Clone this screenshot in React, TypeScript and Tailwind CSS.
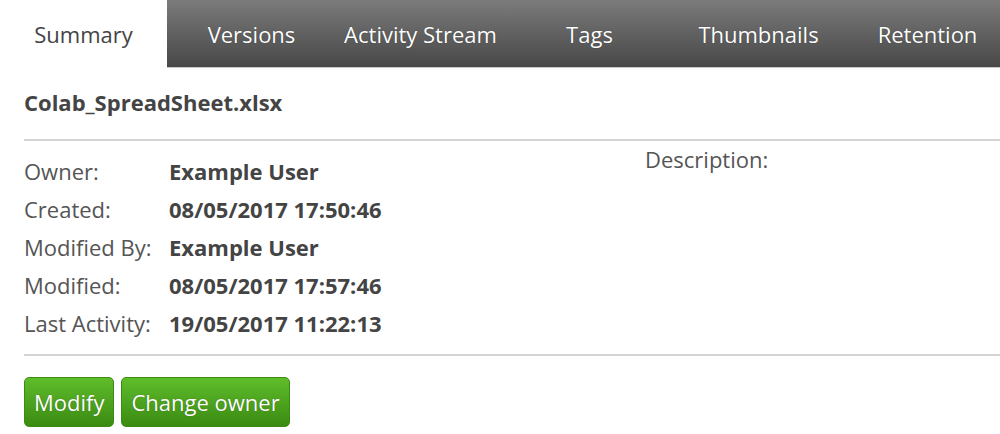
import React from 'react';

const tabs = ['Summary', 'Versions', 'Activity Stream', 'Tags', 'Thumbnails', 'Retention'];

const rows: [string, string][] = [
  ['Owner:', 'Example User'],
  ['Created:', '08/05/2017 17:50:46'],
  ['Modified By:', 'Example User'],
  ['Modified:', '08/05/2017 17:57:46'],
  ['Last Activity:', '19/05/2017 11:22:13'],
];

export default function App() {
  return (
    <div className="w-[1000px] h-[434px] overflow-hidden bg-white font-['Open_Sans',sans-serif] text-[#444]">
      {/* Tabs */}
      <div className="flex h-[68px] overflow-hidden">
        {tabs.map((t, i) =>
          i === 0 ? (
            <div key={t} className="w-[167px] shrink-0 flex items-center justify-center text-[22px] text-[#444] bg-white pt-[1px]">
              {t}
            </div>
          ) : (
            <div
              key={t}
              className="w-[169px] shrink-0 flex items-center justify-center text-[22px] text-white bg-gradient-to-b from-[#7b7b7b] to-[#484848] border-b border-[#c8c8c8] pt-[1px] [text-shadow:0_0_1px_rgba(0,0,0,0.5)]"
            >
              {t}
            </div>
          )
        )}
      </div>

      <div className="pl-6">
        <h1 className="text-[22px] font-bold text-[#444] pt-[21px] pb-[24px] leading-[26px]">Colab_SpreadSheet.xlsx</h1>
        <div className="h-[2px] bg-[#d4d4d4]" />

        <div className="flex">
          <div className="w-[621px] pt-[11px] pb-[12px]">
            {rows.map(([k, v]) => (
              <div key={k} className="flex h-[38px] items-center text-[22px] leading-[26px]">
                <span className="w-[145px] text-[#555]">{k}</span>
                <span className="font-bold text-[#444]">{v}</span>
              </div>
            ))}
          </div>
          <div className="pt-[5px] text-[22px] leading-[26px] text-[#555]">Description:</div>
        </div>

        <div className="h-[2px] bg-[#d4d4d4]" />

        <div className="flex gap-[7px] pt-[21px]">
          <button className="h-[50px] px-[9px] rounded-[5px] border border-[#3c8a12] bg-gradient-to-b from-[#5fbd2a] to-[#3b8b12] text-white text-[22px] leading-[26px] [text-shadow:0_0_1px_rgba(0,0,0,0.4)]">
            Modify
          </button>
          <button className="h-[50px] px-[9px] rounded-[5px] border border-[#3c8a12] bg-gradient-to-b from-[#5fbd2a] to-[#3b8b12] text-white text-[22px] leading-[26px] [text-shadow:0_0_1px_rgba(0,0,0,0.4)]">
            Change owner
          </button>
        </div>
      </div>
    </div>
  );
}
